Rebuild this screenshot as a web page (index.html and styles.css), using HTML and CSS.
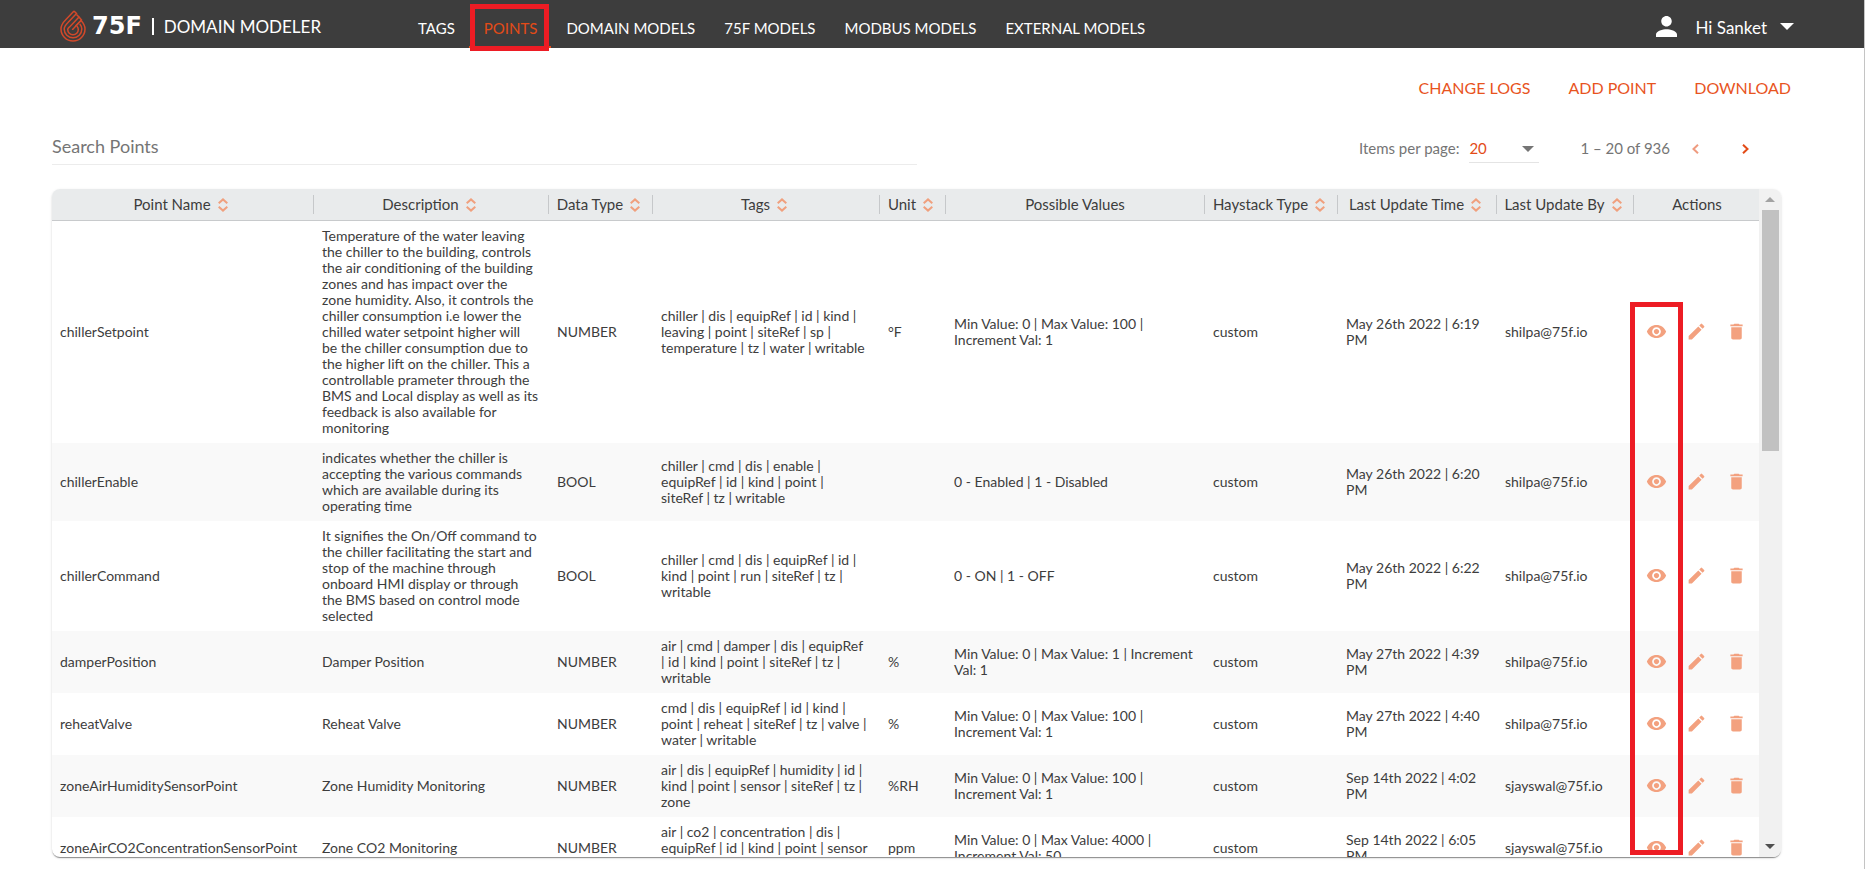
FILE: index.html
```html
<!DOCTYPE html>
<html lang="en">
<head>
<meta charset="utf-8">
<title>75F | Domain Modeler</title>
<link rel="stylesheet" href="styles.css">
</head>
<body>
<svg class="sprite" aria-hidden="true">
  <symbol id="sort" viewBox="0 0 10 14"><path d="M.7 5.200 5 1.400l4.300 3.800M.7 8.800 5 12.600l4.300-3.800" fill="none" stroke="currentColor" stroke-width="2"/></symbol>
  <symbol id="eye" viewBox="0 0 24 24"><path d="M12 4.5C7 4.5 2.73 7.61 1 12c1.73 4.39 6 7.5 11 7.5s9.27-3.11 11-7.5c-1.73-4.39-6-7.5-11-7.5zM12 17c-2.76 0-5-2.24-5-5s2.24-5 5-5 5 2.24 5 5-2.24 5-5 5zm0-8c-1.66 0-3 1.34-3 3s1.34 3 3 3 3-1.34 3-3-1.34-3-3-3z"/></symbol>
  <symbol id="pencil" viewBox="0 0 24 24"><path d="M3 17.25V21h3.75L17.81 9.94l-3.75-3.75L3 17.25zM20.71 7.04a1 1 0 0 0 0-1.41l-2.34-2.34a1 1 0 0 0-1.41 0l-1.83 1.83 3.75 3.75 1.83-1.83z"/></symbol>
  <symbol id="trash" viewBox="0 0 24 24"><path d="M6 19c0 1.1.9 2 2 2h8c1.1 0 2-.9 2-2V7H6v12zM19 4h-3.500l-1-1h-5l-1 1H5v2h14V4z"/></symbol>
</svg>

<header class="topbar">
  <a class="brand" href="#">
    <svg class="drop" viewBox="0 0 26 32" aria-hidden="true"><g fill="none" stroke="#d2492a" stroke-width="1.500"><path d="M14 1 5.500 10C2.500 13 1 15.500 1 19a12 12 0 0 0 24 0c0-3.500-1.500-6-4-8.500L15.500 16"/><path d="M14 1l2.500 2.500-8.500 9C5.500 15 4.200 16.500 4.200 19a8.800 8.800 0 0 0 17.600 0c0-2-.8-3.600-2-5"/><path d="M16.500 4.500 19 7l-8.500 9c-1.500 1.500-2.800 2-2.800 3.500a5.300 5.300 0 0 0 10.600 0c0-1.500-.6-2.500-1.500-3.500"/><path d="M19 7l2.500 3-7.500 8c-.8.800-1.500 1-1.500 2"/></g></svg>
    <span class="wordmark">75F</span>
    <span class="product">DOMAIN MODELER</span>
  </a>
  <nav class="tabs">
    <a class="tab" href="#">TAGS</a>
    <a class="tab active" href="#" aria-current="page">POINTS</a>
    <a class="tab" href="#">DOMAIN MODELS</a>
    <a class="tab" href="#">75F MODELS</a>
    <a class="tab" href="#">MODBUS MODELS</a>
    <a class="tab" href="#">EXTERNAL MODELS</a>
  </nav>
  <button class="user" type="button">
    <svg class="person" viewBox="4 4 16 16" aria-hidden="true"><path d="M12 12c2.210 0 4-1.790 4-4s-1.790-4-4-4-4 1.790-4 4 1.790 4 4 4zm0 2c-2.670 0-8 1.340-8 4v2h16v-2c0-2.660-5.330-4-8-4z"/></svg>
    <span class="greeting">Hi Sanket</span>
    <svg class="caret" viewBox="0 0 14 7" aria-hidden="true"><path d="M0 0h14L7 7z"/></svg>
  </button>
</header>

<main class="page">
  <div class="actions-bar">
    <button class="link" type="button">CHANGE LOGS</button>
    <button class="link" type="button">ADD POINT</button>
    <button class="link" type="button">DOWNLOAD</button>
  </div>

  <div class="tools">
    <input class="search" type="search" placeholder="Search Points" aria-label="Search Points">
    <div class="paginator">
      <label for="size">Items per page:</label>
      <div class="size-box">
        <select id="size" class="size"><option>20</option><option>50</option></select>
        <svg class="size-caret" viewBox="0 0 12 6" aria-hidden="true"><path d="M0 0h12L6 6z"/></svg>
      </div>
      <span class="range">1 – 20 of 936</span>
      <button class="step prev" type="button" aria-label="Previous page" disabled><svg viewBox="0 0 7 10"><path d="M6 .8 1.500 5 6 9.200"/></svg></button>
      <button class="step" type="button" aria-label="Next page"><svg viewBox="0 0 7 10"><path d="M1 .8 5.500 5 1 9.200"/></svg></button>
    </div>
  </div>

  <div class="grid-wrap">
    <div class="card">
      <div class="viewport">
        <table class="grid">
          <colgroup><col class="c-name"><col class="c-desc"><col class="c-type"><col class="c-tags"><col class="c-unit"><col class="c-values"><col class="c-hay"><col class="c-time"><col class="c-by"><col class="c-act"></colgroup>
          <thead>
            <tr>
              <th><div class="head">Point Name<svg class="sort"><use href="#sort"/></svg></div></th>
              <th><div class="head">Description<svg class="sort"><use href="#sort"/></svg></div></th>
              <th><div class="head">Data Type<svg class="sort"><use href="#sort"/></svg></div></th>
              <th><div class="head">Tags<svg class="sort"><use href="#sort"/></svg></div></th>
              <th><div class="head">Unit<svg class="sort"><use href="#sort"/></svg></div></th>
              <th><div class="head">Possible Values</div></th>
              <th><div class="head">Haystack Type<svg class="sort"><use href="#sort"/></svg></div></th>
              <th><div class="head">Last Update Time<svg class="sort"><use href="#sort"/></svg></div></th>
              <th><div class="head">Last Update By<svg class="sort"><use href="#sort"/></svg></div></th>
              <th><div class="head">Actions</div></th>
            </tr>
          </thead>
          <tbody>
            <tr>
              <td>chillerSetpoint</td>
              <td class="desc">Temperature of the water leaving the chiller to the building, controls the air conditioning of the building zones and has impact over the zone humidity. Also, it controls the chiller consumption i.e lower the chilled water setpoint higher will be&nbsp;the chiller consumption due to the higher lift on the chiller. This a controllable prameter through the BMS and Local display as well as its feedback is also available for monitoring</td>
              <td>NUMBER</td>
              <td class="tags">chiller | dis | equipRef | id | kind | leaving | point | siteRef | sp | temperature | tz | water | writable</td>
              <td>°F</td>
              <td>Min Value: 0 | Max Value: 100 | Increment Val: 1</td>
              <td>custom</td>
              <td>May 26th 2022 | 6:19 PM</td>
              <td>shilpa@75f.io</td>
              <td><div class="ops"><button class="op" type="button" aria-label="View"><svg><use href="#eye"/></svg></button><button class="op" type="button" aria-label="Edit"><svg><use href="#pencil"/></svg></button><button class="op" type="button" aria-label="Delete"><svg><use href="#trash"/></svg></button></div></td>
            </tr>
            <tr>
              <td>chillerEnable</td>
              <td class="desc">indicates whether the chiller is accepting the various commands which are available during its operating time</td>
              <td>BOOL</td>
              <td class="tags">chiller | cmd | dis | enable | equipRef | id | kind | point | siteRef | tz | writable</td>
              <td></td>
              <td>0 - Enabled | 1 - Disabled</td>
              <td>custom</td>
              <td>May 26th 2022 | 6:20 PM</td>
              <td>shilpa@75f.io</td>
              <td><div class="ops"><button class="op" type="button" aria-label="View"><svg><use href="#eye"/></svg></button><button class="op" type="button" aria-label="Edit"><svg><use href="#pencil"/></svg></button><button class="op" type="button" aria-label="Delete"><svg><use href="#trash"/></svg></button></div></td>
            </tr>
            <tr>
              <td>chillerCommand</td>
              <td class="desc">It signifies the On/Off command to the chiller facilitating the start and stop of the machine through onboard HMI display or through the BMS based on control mode selected</td>
              <td>BOOL</td>
              <td class="tags">chiller | cmd | dis | equipRef | id | kind | point | run | siteRef | tz | writable</td>
              <td></td>
              <td>0 - ON | 1 - OFF</td>
              <td>custom</td>
              <td>May 26th 2022 | 6:22 PM</td>
              <td>shilpa@75f.io</td>
              <td><div class="ops"><button class="op" type="button" aria-label="View"><svg><use href="#eye"/></svg></button><button class="op" type="button" aria-label="Edit"><svg><use href="#pencil"/></svg></button><button class="op" type="button" aria-label="Delete"><svg><use href="#trash"/></svg></button></div></td>
            </tr>
            <tr>
              <td>damperPosition</td>
              <td class="desc">Damper Position</td>
              <td>NUMBER</td>
              <td class="tags">air | cmd | damper | dis | equipRef | id | kind | point | siteRef | tz | writable</td>
              <td>%</td>
              <td>Min Value: 0 | Max Value: 1 | Increment Val: 1</td>
              <td>custom</td>
              <td>May 27th 2022 | 4:39 PM</td>
              <td>shilpa@75f.io</td>
              <td><div class="ops"><button class="op" type="button" aria-label="View"><svg><use href="#eye"/></svg></button><button class="op" type="button" aria-label="Edit"><svg><use href="#pencil"/></svg></button><button class="op" type="button" aria-label="Delete"><svg><use href="#trash"/></svg></button></div></td>
            </tr>
            <tr>
              <td>reheatValve</td>
              <td class="desc">Reheat Valve</td>
              <td>NUMBER</td>
              <td class="tags">cmd | dis | equipRef | id | kind | point | reheat | siteRef | tz | valve | water | writable</td>
              <td>%</td>
              <td>Min Value: 0 | Max Value: 100 | Increment Val: 1</td>
              <td>custom</td>
              <td>May 27th 2022 | 4:40 PM</td>
              <td>shilpa@75f.io</td>
              <td><div class="ops"><button class="op" type="button" aria-label="View"><svg><use href="#eye"/></svg></button><button class="op" type="button" aria-label="Edit"><svg><use href="#pencil"/></svg></button><button class="op" type="button" aria-label="Delete"><svg><use href="#trash"/></svg></button></div></td>
            </tr>
            <tr>
              <td>zoneAirHumiditySensorPoint</td>
              <td class="desc">Zone Humidity Monitoring</td>
              <td>NUMBER</td>
              <td class="tags">air | dis | equipRef | humidity | id | kind | point | sensor | siteRef | tz | zone</td>
              <td>%RH</td>
              <td>Min Value: 0 | Max Value: 100 | Increment Val: 1</td>
              <td>custom</td>
              <td>Sep 14th 2022 | 4:02 PM</td>
              <td>sjayswal@75f.io</td>
              <td><div class="ops"><button class="op" type="button" aria-label="View"><svg><use href="#eye"/></svg></button><button class="op" type="button" aria-label="Edit"><svg><use href="#pencil"/></svg></button><button class="op" type="button" aria-label="Delete"><svg><use href="#trash"/></svg></button></div></td>
            </tr>
            <tr>
              <td>zoneAirCO2ConcentrationSensorPoint</td>
              <td class="desc">Zone CO2 Monitoring</td>
              <td>NUMBER</td>
              <td class="tags">air | co2 | concentration | dis | equipRef | id | kind | point | sensor | siteRef | tz | zone</td>
              <td>ppm</td>
              <td>Min Value: 0 | Max Value: 4000 | Increment Val: 50</td>
              <td>custom</td>
              <td>Sep 14th 2022 | 6:05 PM</td>
              <td>sjayswal@75f.io</td>
              <td><div class="ops"><button class="op" type="button" aria-label="View"><svg><use href="#eye"/></svg></button><button class="op" type="button" aria-label="Edit"><svg><use href="#pencil"/></svg></button><button class="op" type="button" aria-label="Delete"><svg><use href="#trash"/></svg></button></div></td>
            </tr>
          </tbody>
        </table>
      </div>
      <div class="scrollbar" aria-hidden="true">
        <svg class="arrow up" viewBox="0 0 10 5"><path d="M0 5h10L5 0z"/></svg>
        <div class="track"><div class="thumb"></div></div>
        <svg class="arrow down" viewBox="0 0 10 5"><path d="M0 0h10L5 5z"/></svg>
      </div>
    </div>
    <div class="mark mark-view"></div>
  </div>
</main>
</body>
</html>
```
FILE: styles.css
```css
* {
  box-sizing: border-box;
}

body {
  margin: 0;
  height: 100vh;
  display: flex;
  flex-direction: column;
  overflow: hidden;
  border-right: 1px solid #c4c4c4;
  background: #fff;
  color: #3d3d3d;
  font-family: Lato, sans-serif;
  font-size: 14px;
}

button,
input,
select {
  margin: 0;
  padding: 0;
  border: 0;
  background: none;
  color: inherit;
  font: inherit;
}

.sprite {
  display: none;
}

/* Top bar */
.topbar {
  flex: none;
  display: flex;
  height: 48px;
  padding: 0 70px 0 60px;
  background: #3d3d3d;
  color: #fff;
}

.brand {
  display: flex;
  align-items: center;
  width: 343px;
  padding-top: 4px;
  color: #fff;
  text-decoration: none;
  white-space: nowrap;
}

.drop {
  width: 26px;
  height: 32px;
}

.wordmark {
  margin-left: 6px;
  font: bold 24px/24px "DejaVu Sans", sans-serif;
}

.product {
  margin-left: 10px;
  padding-left: 10px;
  border-left: 2px solid #fff;
  font-size: 17px;
  line-height: 17px;
}

.tabs {
  display: flex;
  flex: 1;
}

.tab {
  position: relative;
  padding: 18px 14px 0 15px;
  color: #fff;
  font-size: 15px;
  line-height: 20px;
  text-decoration: none;
  white-space: nowrap;
}

.tab.active {
  color: #e34b17;
  border-bottom: 2px solid #e34b17;
}

.tab.active::after {
  content: "";
  position: absolute;
  inset: 4px 2px -5px 1px;
  border: 5px solid #ed1c24;
}

.user {
  display: flex;
  align-items: center;
  padding-top: 4px;
  font-size: 17px;
}

.person {
  width: 21px;
  height: 21px;
  margin-right: 19px;
  fill: #fff;
}

.greeting {
  padding-top: 2px;
}

.caret {
  width: 14px;
  height: 7px;
  margin-left: 13px;
  fill: #fff;
}

/* Page */
.page {
  flex: 1;
  min-height: 0;
  display: flex;
  flex-direction: column;
  padding: 28px 83px 12px 52px;
}

.actions-bar {
  display: flex;
  justify-content: flex-end;
  gap: 38px;
  margin-right: -10px;
}

.link {
  color: #e8541e;
  font-size: 16px;
  line-height: 24px;
}

.tools {
  display: flex;
  justify-content: space-between;
  align-items: flex-end;
  height: 65px;
  margin-bottom: 24px;
}

.search {
  width: 50%;
  height: 36px;
  padding-bottom: 2px;
  border-bottom: 1px solid #ececec;
  border-radius: 0;
  font-size: 18px;
  outline: 0;
  appearance: none;
}

.search::placeholder {
  color: #757575;
  opacity: 1;
}

.paginator {
  display: flex;
  align-items: center;
  height: 34px;
  margin-right: 11px;
  color: #757575;
  font-size: 15px;
}

.size-box {
  position: relative;
  width: 70px;
  margin: 0 41px 0 10px;
}

.size {
  width: 100%;
  height: 30px;
  border-bottom: 1px solid #e4e4e4;
  border-radius: 0;
  color: #e34b17;
  appearance: none;
}

.size-caret {
  position: absolute;
  top: 13px;
  right: 5px;
  width: 12px;
  height: 6px;
  fill: #757575;
  pointer-events: none;
}

.step {
  width: 50px;
  height: 30px;
}

.step svg {
  width: 7px;
  height: 10px;
  fill: none;
  stroke: #e34b17;
  stroke-width: 2;
}

.prev {
  opacity: .55;
}

/* Table card */
.grid-wrap {
  position: relative;
  flex: 1;
  min-height: 0;
}

.card {
  display: flex;
  height: 100%;
  overflow: hidden;
  border-radius: 8px;
  box-shadow: 0 2px 1px -1px rgba(0, 0, 0, .3), 0 1px 1px rgba(0, 0, 0, .14), 0 1px 3px rgba(0, 0, 0, .12);
}

.viewport {
  flex: 1;
  min-width: 0;
  overflow: hidden;
}

.grid {
  width: 100%;
  table-layout: fixed;
  border-collapse: separate;
  border-spacing: 0;
}

.c-name { width: 262px; }
.c-desc { width: 235px; }
.c-type { width: 104px; }
.c-tags { width: 227px; }
.c-unit { width: 66px; }
.c-values { width: 259px; }
.c-hay { width: 133px; }
.c-time { width: 159px; }
.c-by { width: 137px; }
.c-act { width: 126px; }

.grid th {
  height: 32px;
  padding: 0;
  border-bottom: 1px solid #c8cacc;
  background: #e9ebec;
  font-size: 15px;
  font-weight: 400;
}

.head {
  display: flex;
  justify-content: center;
  align-items: center;
  gap: 7px;
  height: 19px;
  border-right: 1px solid #c6c8ca;
  line-height: 19px;
  white-space: nowrap;
}

th:last-child .head {
  border-right: 0;
}

.sort {
  flex: none;
  width: 10px;
  height: 14px;
  margin-right: 4px;
  color: #f0a07e;
}

.grid td {
  padding: 7px 8px;
  line-height: 16px;
  vertical-align: middle;
}

.grid .desc {
  padding-right: 9px;
}

.grid .tags {
  padding-right: 11px;
}

.grid tbody tr:nth-child(even) {
  background: #f9f9f9;
}

.grid td:last-child {
  padding: 0 2px 2px 0;
}

.ops {
  display: flex;
  justify-content: center;
}

.op {
  display: flex;
  justify-content: center;
  width: 40px;
}

.op svg {
  width: 21px;
  height: 21px;
  fill: #f3a17f;
}

/* Scrollbar */
.scrollbar {
  flex: none;
  display: flex;
  flex-direction: column;
  align-items: center;
  width: 22px;
  background: #f1f1f1;
}

.arrow {
  width: 10px;
  height: 5px;
  margin: 8px 0;
}

.up {
  fill: #a3a3a3;
}

.down {
  fill: #505050;
}

.track {
  flex: 1;
  width: 17px;
}

.thumb {
  height: 38.5%;
  background: #c1c1c1;
}

.mark {
  position: absolute;
  border: 5px solid #ed1c24;
  pointer-events: none;
}

.mark-view {
  top: 113px;
  right: 98px;
  bottom: 2px;
  width: 53px;
}
```
